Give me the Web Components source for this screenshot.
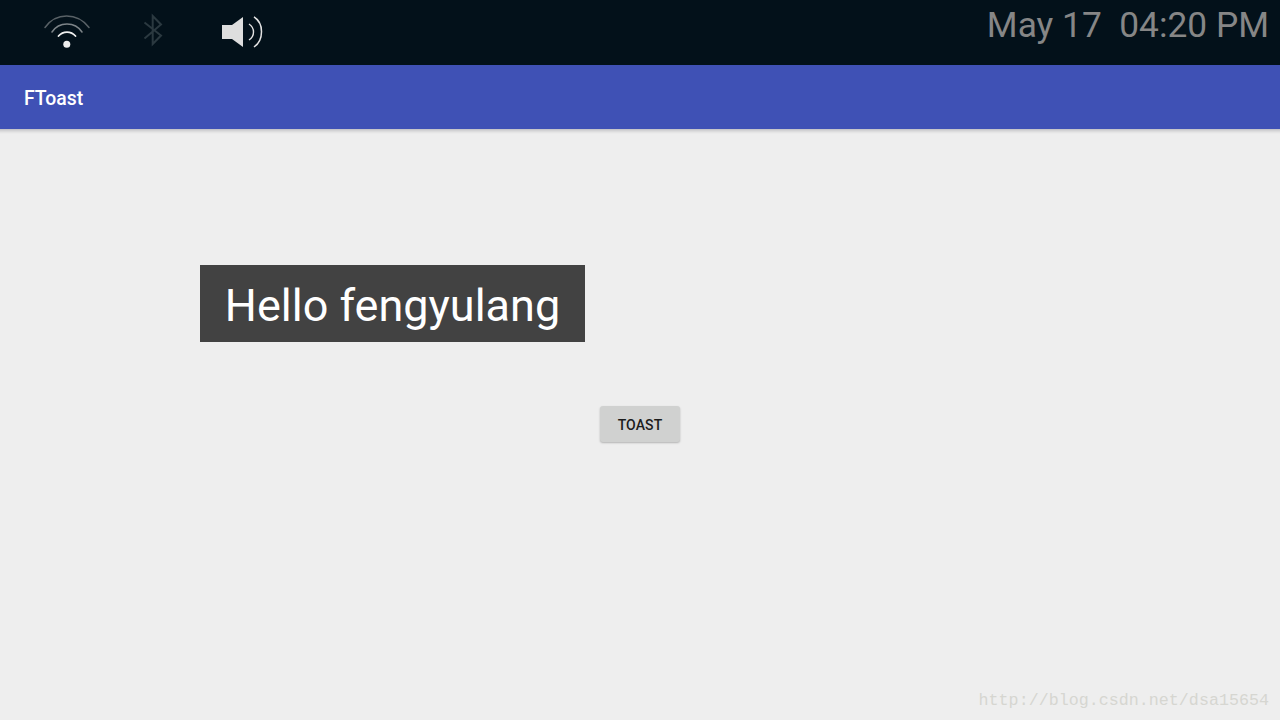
<!DOCTYPE html>
<html>
<head>
<meta charset="utf-8">
<title>FToast</title>
<style>
    html, body {
        margin: 0;
        height: 100%;
    }
    body {
        width: 1280px;
        height: 720px;
        overflow: hidden;
        font-family: Roboto, "Liberation Sans", sans-serif;
    }
</style>
</head>
<body>
<app-screen>
    <status-bar slot="status" date="May 17" time="04:20 PM"></status-bar>
    <app-toolbar slot="toolbar">FToast</app-toolbar>
    <toast-button>TOAST</toast-button>
    <toast-message slot="overlay">Hello fengyulang</toast-message>
    <water-mark slot="overlay">http://blog.csdn.net/dsa15654</water-mark>
</app-screen>

<script>
const screenTemplate = document.createElement("template");
screenTemplate.innerHTML = `
    <style>
        :host {
            position: relative;
            display: flex;
            flex-direction: column;
            width: 1280px;
            height: 720px;
            background-color: #eeeeee;
        }
        .content {
            flex: 1;
            display: flex;
            justify-content: center;
            padding-top: 277px;
        }
    </style>
    <slot name="status"></slot>
    <slot name="toolbar"></slot>
    <div class="content"><slot></slot></div>
    <slot name="overlay"></slot>
`;

const statusTemplate = document.createElement("template");
statusTemplate.innerHTML = `
    <style>
        :host {
            display: flex;
            align-items: flex-start;
            justify-content: space-between;
            height: 65px;
            flex: none;
            padding: 0 11px 0 44px;
            background-color: #03111a;
        }
        .icons {
            display: flex;
            align-items: flex-start;
        }
        svg {
            display: block;
        }
        .wifi {
            width: 46px;
            height: 50px;
        }
        .bt {
            width: 22px;
            height: 50px;
            margin-left: 52px;
        }
        .vol {
            width: 42px;
            height: 50px;
            margin-left: 58px;
        }
        .clock {
            font-size: 35.3px;
            line-height: 50px;
            color: #868686;
            white-space: pre;
        }
    </style>
    <div class="icons">
        <svg class="wifi" viewBox="0 0 46 50" fill="none" stroke-linecap="round">
            <path d="M1 27.5 C 12 12.3, 33 12.3, 45 27.5" stroke="#596166" stroke-width="1.5"/>
            <path d="M8 32 C 15 21.3, 31 21.3, 38 32" stroke="#7d8488" stroke-width="1.5"/>
            <path d="M14.5 36 C 19 30.7, 27 30.7, 31.5 36" stroke="#f0f0f0" stroke-width="1.8"/>
            <circle cx="22.8" cy="44.3" r="3.5" fill="#eeeeee"/>
        </svg>
        <svg class="bt" viewBox="0 0 22 50" fill="none">
            <path d="M2.5 22.5 L19 35.5 L10.7 44 L10.7 16 L19 24.5 L2.5 38.5" stroke="#2b3940" stroke-width="2"/>
        </svg>
        <svg class="vol" viewBox="0 0 42 50" fill="none">
            <path d="M0 25 L10 25 L21 17 L21 47 L10 39 L0 39 Z" fill="#dedede"/>
            <path d="M27 24 C 33 28, 33 36, 27 40" stroke="#e2e2e2" stroke-width="1.4"/>
            <path d="M32 17 C 42 23, 42 40, 32 47" stroke="#e2e2e2" stroke-width="1.5"/>
        </svg>
    </div>
    <div class="clock" id="s_clock"></div>
`;

const toolbarTemplate = document.createElement("template");
toolbarTemplate.innerHTML = `
    <style>
        :host {
            display: flex;
            align-items: center;
            flex: none;
            height: 64px;
            padding: 3px 24px 0;
            box-sizing: border-box;
            background-color: #3f51b5;
            box-shadow: 0 1px 0 #c6c6ca, 0 2px 0 #d2d2d4, 0 3px 0 #dcdcdd, 0 4px 0 #e5e5e5, 0 5px 0 #ebebeb;
            color: #ffffff;
            font-size: 19.4px;
            font-weight: 500;
        }
    </style>
    <slot></slot>
`;

const buttonTemplate = document.createElement("template");
buttonTemplate.innerHTML = `
    <style>
        :host {
            display: flex;
            align-items: center;
            justify-content: center;
            width: 80px;
            height: 36px;
            padding-top: 1px;
            box-sizing: border-box;
            border-radius: 3px;
            background-color: #d0d1d0;
            box-shadow: 0 1px 2px rgba(0, 0, 0, 0.25);
            color: #1c1c1c;
            font-size: 14px;
            font-weight: 500;
            letter-spacing: 0.1px;
        }
    </style>
    <slot></slot>
`;

const toastTemplate = document.createElement("template");
toastTemplate.innerHTML = `
    <style>
        :host {
            position: absolute;
            left: 200px;
            top: 265px;
            width: 385px;
            height: 77px;
            padding-top: 3px;
            box-sizing: border-box;
            display: flex;
            align-items: center;
            justify-content: center;
            background-color: #424242;
            color: #ffffff;
            font-size: 45px;
            white-space: nowrap;
        }
    </style>
    <slot></slot>
`;

const markTemplate = document.createElement("template");
markTemplate.innerHTML = `
    <style>
        :host {
            position: absolute;
            right: 11px;
            bottom: 9px;
            color: #d6d6d1;
            font-family: "Liberation Mono", monospace;
            font-size: 16.7px;
            line-height: 20px;
            white-space: nowrap;
        }
    </style>
    <slot></slot>
`;

// Elements that only wrap a template
const defineSimple = (name, template) => {
    customElements.define(name, class extends HTMLElement {
        constructor() {
            super();
            this.attachShadow({mode: "open"});
            this.shadowRoot.append(template.content.cloneNode(true));
        }
    });
};

class StatusBar extends HTMLElement {
    constructor() {
        super();
        this.attachShadow({mode: "open"});
        this.shadowRoot.append(statusTemplate.content.cloneNode(true));
    }

    connectedCallback() {
        let clock = this.shadowRoot.getElementById("s_clock");
        clock.textContent = `${this.getAttribute("date")}  ${this.getAttribute("time")}`;
    }
}

defineSimple("app-screen", screenTemplate);
defineSimple("app-toolbar", toolbarTemplate);
defineSimple("toast-button", buttonTemplate);
defineSimple("toast-message", toastTemplate);
defineSimple("water-mark", markTemplate);
customElements.define("status-bar", StatusBar);
</script>
</body>
</html>
